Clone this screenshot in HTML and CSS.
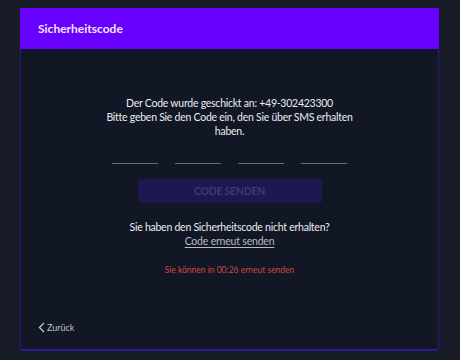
FILE: index.html
```html
<!DOCTYPE html>
<html lang="de">
<head>
<meta charset="utf-8">
<link rel="stylesheet" href="styles.css">
</head>
<body>
<div class="modal">
  <div class="modal-header">Sicherheitscode</div>
  <div class="modal-body">
    <p class="info">Der Code wurde geschickt an: +49-302423300<br>Bitte geben Sie den Code ein, den Sie über SMS erhalten haben.</p>
    <div class="code-inputs">
      <span class="code-field"></span>
      <span class="code-field"></span>
      <span class="code-field"></span>
      <span class="code-field"></span>
    </div>
    <button class="send-btn" disabled>CODE SENDEN</button>
    <p class="resend-q">Sie haben den Sicherheitscode nicht erhalten?</p>
    <a class="resend-link">Code erneut senden</a>
    <p class="timer">Sie können in 00:26 erneut senden</p>
    <div class="spacer"></div>
    <a class="back">
      <svg class="back-icon" width="7" height="11" viewBox="0 0 7 11"><path d="M6 1 L1.5 5.5 L6 10" fill="none" stroke="#c8c8d0" stroke-width="1.3"/></svg>
      Zurück
    </a>
  </div>
</div>
</body>
</html>
```
FILE: styles.css
```css
* { box-sizing: border-box; }
html, body { margin: 0; padding: 0; }
body {
  width: 460px;
  height: 360px;
  background: #181c29;
  font-family: "Lato", "Noto Sans", sans-serif;
  padding: 8px 21px 9px 20px;
}
.modal {
  height: 343px;
  display: flex;
  flex-direction: column;
}
.modal-header {
  background: #6700fd;
  height: 41px;
  color: #f0e8ff;
  font-size: 12px;
  font-weight: 700;
  padding: 0 0 1px 18px;
  display: flex;
  align-items: center;
}
.modal-body {
  flex: 1;
  background: #111724;
  border: 1px solid #2a1780;
  border-bottom: 2px solid #33198f;
  border-top: none;
  border-radius: 0 0 3px 3px;
  display: flex;
  flex-direction: column;
  align-items: center;
  color: #ececf0;
}
.info {
  margin: 47px 0 0;
  font-size: 10.5px;
  letter-spacing: -0.25px;
  line-height: 14px;
  text-align: center;
  width: 262px;
}
.code-inputs {
  display: flex;
  gap: 17px;
  margin-top: 14px;
}
.code-field {
  width: 46px;
  height: 12px;
  border-bottom: 1px solid #6a6e7a;
}
.send-btn {
  margin-top: 15px;
  width: 184px;
  height: 24px;
  border: none;
  border-radius: 3px;
  background: #1e1752;
  color: #3f3a72;
  font-family: inherit;
  font-size: 10.5px;
  letter-spacing: -0.25px;
  font-weight: 700;
}
.resend-q {
  margin: 17px 0 0;
  font-size: 10.5px;
  letter-spacing: -0.25px;
  line-height: 14px;
}
.resend-link {
  font-size: 10.5px;
  letter-spacing: -0.2px;
  line-height: 14px;
  color: #b8bac2;
  text-decoration: underline;
  text-underline-offset: 2px;
}
.timer {
  margin: 17px 0 0;
  font-size: 8.5px;
  color: #d24545;
}
.spacer { flex: 1; }
.back {
  align-self: flex-start;
  margin: 0 0 16px 17px;
  font-size: 9px;
  color: #c0c2ca;
  display: flex;
  align-items: center;
  gap: 2px;
}
```
